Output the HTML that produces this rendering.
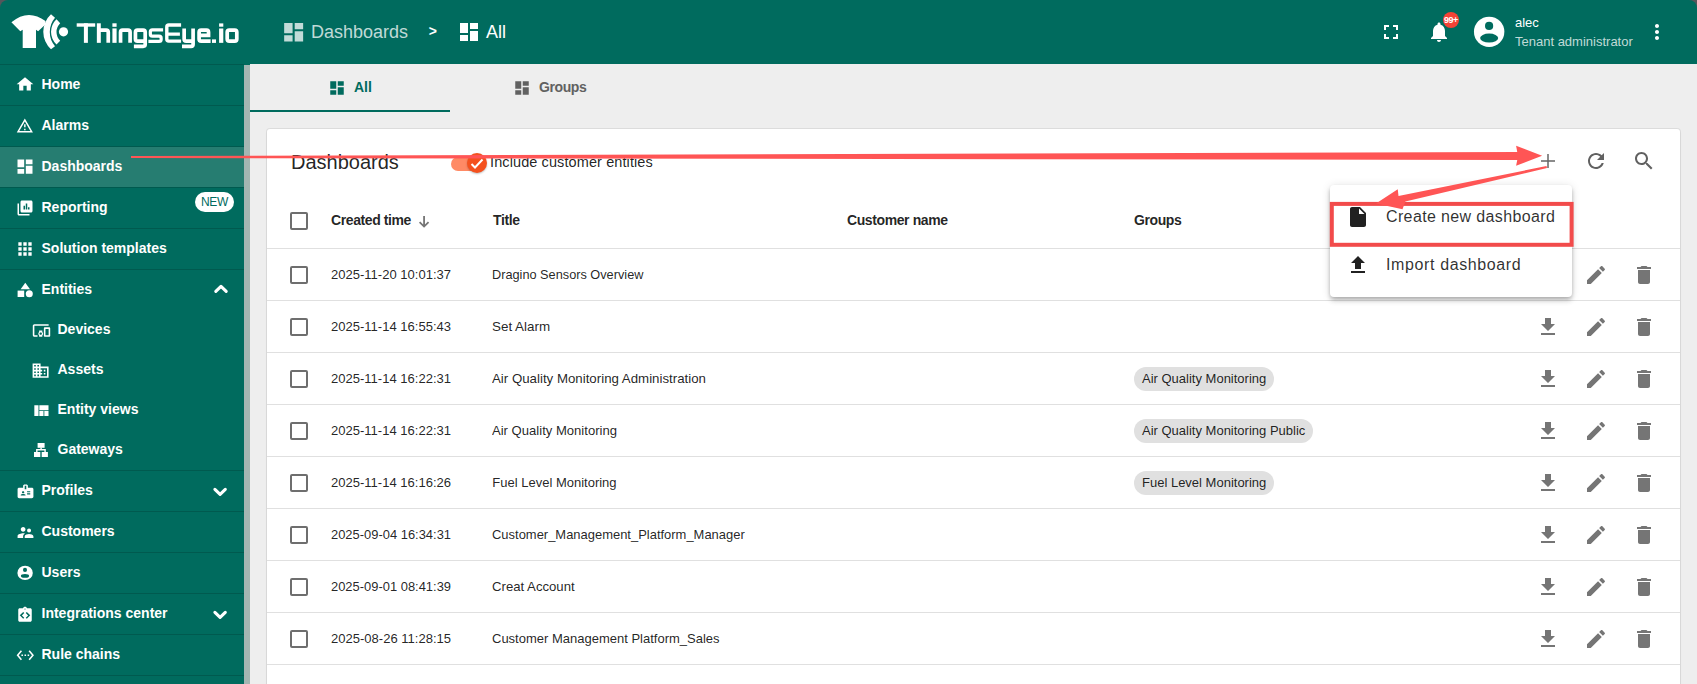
<!DOCTYPE html><html><head><meta charset="utf-8"><style>
*{box-sizing:border-box;margin:0;padding:0}
html,body{width:1697px;height:684px;overflow:hidden;background:#56565b;font-family:"Liberation Sans",sans-serif}
#root{position:absolute;left:0;top:0;width:1697px;height:684px;overflow:hidden;border-radius:8px 8px 0 0;background:#006b5e}
.a{position:absolute}
.t{position:absolute;white-space:nowrap;line-height:1}
#hdr{position:absolute;left:0;top:0;width:1697px;height:64px;background:#006b5e}
#side{position:absolute;left:0;top:64px;width:244px;height:620px;background:#006b5e}
#sbar{position:absolute;left:244px;top:65px;width:6px;height:619px;background:#a4b6b2}
.dv{position:absolute;left:0;width:244px;height:1px;background:#005a4f}
.it{position:absolute;left:0;width:244px;height:40px}
.sel{background:#267d71}
.lbl{position:absolute;color:#fff;font-weight:bold;font-size:14px;line-height:16px;white-space:nowrap}
.ic{position:absolute;width:18px;height:18px;fill:#fff}
.card{position:absolute;left:267px;top:129px;width:1413px;height:620px;background:#fff;border-radius:3px;box-shadow:0 0 0 1px rgba(0,0,0,.07),0 1px 2px rgba(0,0,0,.08)}
.rl{position:absolute;left:267px;width:1413px;height:1px;background:#e0e0e0}
.cb{position:absolute;left:290px;width:18px;height:18px;border:2px solid #6e6e6e;border-radius:2px}
.cell{position:absolute;font-size:13px;transform-origin:0 50%;color:rgba(0,0,0,.87);white-space:nowrap;line-height:16px}
.hc{position:absolute;font-size:14px;letter-spacing:-.4px;font-weight:bold;color:rgba(0,0,0,.87);white-space:nowrap;line-height:16px}
.chip{position:absolute;left:1134px;height:24px;border-radius:12px;background:#e0e0e0;font-size:13px;color:rgba(0,0,0,.87);padding:0 8px;line-height:24px;white-space:nowrap}
.act{position:absolute;width:24px;height:24px;fill:#757575}
</style></head><body><div id="root">
<div class="a" style="left:250px;top:64px;width:1447px;height:620px;background:#eeeeee"></div><div id="side"></div><div id="sbar"></div>
<div class="dv" style="top:64px"></div>
<div class="dv" style="top:105px"></div>
<div class="dv" style="top:146px"></div>
<div class="dv" style="top:187px"></div>
<div class="dv" style="top:228px"></div>
<div class="dv" style="top:269px"></div>
<div class="dv" style="top:470px"></div>
<div class="dv" style="top:511px"></div>
<div class="dv" style="top:552px"></div>
<div class="dv" style="top:593px"></div>
<div class="dv" style="top:634px"></div>
<div class="dv" style="top:675px"></div>
<svg class="a" style="left:15.00px;top:75.00px;width:20.00px;height:18.50px;fill:#fff" viewBox="0 0 24 24" preserveAspectRatio="none"><path d="M10 20v-6h4v6h5v-8h3L12 3 2 12h3v8z"/></svg>
<div class="lbl" style="left:41.5px;top:76px">Home</div>
<svg class="a" style="left:16.00px;top:117.20px;width:17.70px;height:17.70px;fill:#fff" viewBox="0 0 24 24" preserveAspectRatio="none"><path d="M12 5.99 19.53 19H4.47L12 5.99M12 2 1 21h22L12 2zm1 14h-2v2h2v-2zm0-6h-2v4h2v-4z"/></svg>
<div class="lbl" style="left:41.5px;top:117px">Alarms</div>
<div class="it sel" style="top:147px"></div>
<svg class="a" style="left:15.00px;top:157.00px;width:20.00px;height:19.00px;fill:#fff" viewBox="0 0 24 24" preserveAspectRatio="none"><path d="M3 13h8V3H3v10zm0 8h8v-6H3v6zm10 0h8V11h-8v10zm0-18v6h8V3h-8z"/></svg>
<div class="lbl" style="left:41.5px;top:158px">Dashboards</div>
<svg class="a" style="left:15.70px;top:199.20px;width:18.00px;height:18.00px;fill:#fff" viewBox="0 0 24 24" preserveAspectRatio="none"><path d="M4 6H2v14c0 1.1.9 2 2 2h14v-2H4V6zm16-4H8c-1.1 0-2 .9-2 2v12c0 1.1.9 2 2 2h12c1.1 0 2-.9 2-2V4c0-1.1-.9-2-2-2zm-8 12h-2V9h2v5zm3 0h-2V6h2v8zm3 0h-2v-3h2v3z"/></svg>
<div class="lbl" style="left:41.5px;top:199px">Reporting</div>
<svg class="a" style="left:15.00px;top:239.00px;width:20.00px;height:20.00px;fill:#fff" viewBox="0 0 24 24" preserveAspectRatio="none"><path d="M4 8h4V4H4v4zm6 12h4v-4h-4v4zm-6 0h4v-4H4v4zm0-6h4v-4H4v4zm6 0h4v-4h-4v4zm6-10v4h4V4h-4zm-6 4h4V4h-4v4zm6 6h4v-4h-4v4zm0 6h4v-4h-4v4z"/></svg>
<div class="lbl" style="left:41.5px;top:240px">Solution templates</div>
<div class="lbl" style="left:41.5px;top:281px">Entities</div>
<svg class="a" style="left:200px;top:270px;width:40px;height:40px" viewBox="200 270 40 40"><path d="M215.8 291.40 L221 286.30 L226.2 291.40" fill="none" stroke="#fff" stroke-width="3.1" stroke-linecap="round" stroke-linejoin="round"/></svg>
<svg class="a" style="left:31.70px;top:320.90px;width:19.00px;height:19.00px;fill:#fff" viewBox="0 0 24 24" preserveAspectRatio="none"><path d="M3 6h18V4H3c-1.1 0-2 .9-2 2v12c0 1.1.9 2 2 2h4v-2H3V6zm10 6H9v1.78c-.61.55-1 1.33-1 2.22s.39 1.67 1 2.22V20h4v-1.78c.61-.55 1-1.34 1-2.22s-.39-1.67-1-2.22V12zm-2 5.5c-.83 0-1.5-.67-1.5-1.5s.67-1.5 1.5-1.5 1.5.67 1.5 1.5-.67 1.5-1.5 1.5zM22 8h-6c-.5 0-1 .5-1 1v10c0 .5.5 1 1 1h6c.5 0 1-.5 1-1V9c0-.5-.5-1-1-1zm-1 10h-4v-8h4v8z"/></svg>
<div class="lbl" style="left:57.5px;top:321px">Devices</div>
<svg class="a" style="left:31.40px;top:360.50px;width:19.20px;height:19.20px;fill:#fff" viewBox="0 0 24 24" preserveAspectRatio="none"><path d="M12 7V3H2v18h20V7H12zM6 19H4v-2h2v2zm0-4H4v-2h2v2zm0-4H4V9h2v2zm0-4H4V5h2v2zm4 12H8v-2h2v2zm0-4H8v-2h2v2zm0-4H8V9h2v2zm0-4H8V5h2v2zm10 12h-8v-2h2v-2h-2v-2h2v-2h-2V9h8v10zm-2-8h-2v2h2v-2zm0 4h-2v2h2v-2z"/></svg>
<div class="lbl" style="left:57.5px;top:361px">Assets</div>
<svg class="a" style="left:30.90px;top:400.80px;width:20.00px;height:20.00px;fill:#fff" viewBox="0 0 24 24" preserveAspectRatio="none"><path d="M10 18h5v-6h-5v6zm-6 0h5V5H4v13zm12 0h5v-6h-5v6zM10 5v6h11V5H10z"/></svg>
<div class="lbl" style="left:57.5px;top:401px">Entity views</div>
<div class="lbl" style="left:57.5px;top:441px">Gateways</div>
<svg class="a" style="left:15.50px;top:482.50px;width:19.00px;height:16.60px;fill:#fff" viewBox="0 0 24 24" preserveAspectRatio="none"><path d="M20 7h-5V4c0-1.1-.9-2-2-2h-2c-1.1 0-2 .9-2 2v3H4c-1.1 0-2 .9-2 2v11c0 1.1.9 2 2 2h16c1.1 0 2-.9 2-2V9c0-1.1-.9-2-2-2zM9 12c.83 0 1.5.67 1.5 1.5S9.83 15 9 15s-1.5-.67-1.5-1.5S8.17 12 9 12zm3 6H6v-.75c0-1 2-1.5 3-1.5s3 .5 3 1.5V18zm1-9h-2V4h2v5zm5 7.5h-4V15h4v1.5zm0-3h-4V12h4v1.5z"/></svg>
<div class="lbl" style="left:41.5px;top:482px">Profiles</div>
<svg class="a" style="left:200px;top:471px;width:40px;height:40px" viewBox="200 471 40 40"><path d="M214.9 489.40 L220.1 494.40 L225.3 489.40" fill="none" stroke="#fff" stroke-width="3.1" stroke-linecap="round" stroke-linejoin="round"/></svg>
<svg class="a" style="left:15.50px;top:523.00px;width:19.00px;height:19.00px;fill:#fff" viewBox="0 0 24 24" preserveAspectRatio="none"><path d="M16.5 12c1.38 0 2.49-1.12 2.49-2.5S17.88 7 16.5 7C15.12 7 14 8.12 14 9.5s1.12 2.5 2.5 2.5zM9 11c1.66 0 2.99-1.34 2.99-3S10.66 5 9 5C7.34 5 6 6.34 6 8s1.34 3 3 3zm7.5 3c-1.83 0-5.5.92-5.5 2.75V19h11v-2.25c0-1.83-3.67-2.75-5.5-2.75zM9 13c-2.33 0-7 1.17-7 3.5V19h7v-2.25c0-.85.33-2.34 2.37-3.47C10.5 13.1 9.66 13 9 13z"/></svg>
<div class="lbl" style="left:41.5px;top:523px">Customers</div>
<div class="lbl" style="left:41.5px;top:564px">Users</div>
<svg class="a" style="left:15.75px;top:605.65px;width:18.00px;height:18.00px;fill:#fff" viewBox="0 0 24 24" preserveAspectRatio="none"><path d="M19 3h-4.18C14.4 1.84 13.3 1 12 1s-2.4.84-2.82 2H5c-1.1 0-2 .9-2 2v14c0 1.1.9 2 2 2h14c1.1 0 2-.9 2-2V5c0-1.1-.9-2-2-2zm-8 12.59L9.59 17 5 12.41 9.59 8 11 9.41 7.83 12.5 11 15.59zm1-10.84c-.41 0-.75-.34-.75-.75s.34-.75.75-.75.75.34.75.75-.34.75-.75.75zM14.41 17 13 15.59l3.17-3.09L13 9.41 14.41 8 19 12.41 14.41 17z"/></svg>
<div class="lbl" style="left:41.5px;top:605px">Integrations center</div>
<svg class="a" style="left:200px;top:594px;width:40px;height:40px" viewBox="200 594 40 40"><path d="M214.9 612.40 L220.1 617.40 L225.3 612.40" fill="none" stroke="#fff" stroke-width="3.1" stroke-linecap="round" stroke-linejoin="round"/></svg>
<svg class="a" style="left:15.80px;top:646.25px;width:18.60px;height:18.60px;fill:#fff" viewBox="0 0 24 24" preserveAspectRatio="none"><path d="M7.77 6.76 6.23 5.48.82 12l5.41 6.52 1.54-1.28L3.42 12l4.35-5.24zM7 13h2v-2H7v2zm10-2h-2v2h2v-2zm-6 2h2v-2h-2v2zm6.77-7.52-1.54 1.28L20.58 12l-4.35 5.24 1.54 1.28L23.18 12l-5.41-6.52z"/></svg>
<div class="lbl" style="left:41.5px;top:646px">Rule chains</div>
<svg class="a" style="left:0;top:0;width:244px;height:684px;fill:#fff" viewBox="0 0 244 684"><path d="M25.3 282.7 L30 289.2 H20.6 Z"/><rect x="17.6" y="290.6" width="6.6" height="6.4"/><circle cx="29.3" cy="293.8" r="3.5"/><rect x="37.6" y="443" width="7" height="4.8"/><rect x="40.4" y="447.5" width="1.4" height="2"/><path d="M36.1 449.1 H45.8 V452 H44.4 V450.6 H37.5 V452 H36.1 Z"/><rect x="34" y="452" width="6.3" height="5"/><ellipse cx="25.1" cy="572.9" rx="7.7" ry="7.2"/><circle cx="25" cy="569.9" r="2.05" fill="#006b5e"/><ellipse cx="25" cy="575.9" rx="4.1" ry="1.9" fill="#006b5e"/><rect x="41.7" y="452" width="6.2" height="5"/></svg>
<div class="a" style="left:195px;top:192px;width:39px;height:20px;border-radius:10px;background:#fff;color:#006b5e;font-size:12px;letter-spacing:-.4px;line-height:20px;text-align:center">NEW</div>
<svg class="a" style="left:0;top:0;width:250px;height:64px" viewBox="0 0 250 64"><g fill="#fff"><path d="M11.4 22.3 Q28.15 8.1 45.5 21.1 L44.9 25 L38.1 31.2 L36 29.7 V48.1 H22.7 V29.7 L20.3 31.2 Z"/><path d="M51 14.3 A23.7 23.7 0 0 0 51 49.3 L55 46.2 A22.1 22.1 0 0 1 55 17.7 Z"/><path d="M56.5 19.2 A17.2 17.2 0 0 0 56.5 44.4 L60.2 40.7 A12.2 12.2 0 0 1 60.2 23.2 Z"/><circle cx="63.5" cy="31.8" r="4.6"/><rect x="76.7" y="23.3" width="18.5" height="3.4"/><rect x="83.9" y="23.3" width="4.0" height="19.55"/><rect x="112.4" y="23.3" width="4.2" height="3.5"/><rect x="112.4" y="28.4" width="4.2" height="14.45"/><rect x="219.1" y="23.4" width="4.2" height="3.3"/><rect x="219.1" y="28.5" width="4.2" height="14.35"/><rect x="212" y="39.4" width="4" height="3.5"/><rect x="96.85" y="23.3" width="3.95" height="19.55"/></g><g fill="none" stroke="#fff" stroke-width="3.7"><path d="M98.8 30.15 H106.2 Q108.25 30.15 108.25 32.2 V42.85"/><path d="M120.55 42.85 V32.2 Q120.55 30.15 122.6 30.15 H128.05 Q130.1 30.15 130.1 32.2 V42.85"/><path d="M145.2 41.1 H137.5 Q135.45 41.1 135.45 39.05 V32.2 Q135.45 30.15 137.5 30.15 H143.15 Q145.2 30.15 145.2 32.2 V44.3 Q145.2 46.3 143.15 46.3 H133.9"/><path d="M163.1 29.8 H152.4 Q150.35 29.8 150.35 31.85 V34.2 Q150.35 36.2 152.4 36.2 H159.1 Q161.15 36.2 161.15 38.25 V39.4 Q161.15 41.3 159.1 41.3 H148.4" stroke-width="3.2"/><path d="M181.1 25.05 H168.8 Q166.8 25.05 166.8 27.1 V39.05 Q166.8 41.1 168.8 41.1 H181.1" stroke-width="3.4"/><path d="M166.8 34.15 H179.9" stroke-width="3.2"/><path d="M184.15 28.5 V39.05 Q184.15 41.1 186.2 41.1 H193.1 M193.1 28.5 V44.25 Q193.1 46.3 191.05 46.3 H182"/><path d="M210.6 41.1 H201.15 Q199.1 41.1 199.1 39.05 V32.2 Q199.1 30.1 201.15 30.1 H206.5 Q208.55 30.1 208.55 32.2 V35.35 H199.1"/><path d="M229.3 30.05 H234.75 Q236.8 30.05 236.8 32.1 V39.05 Q236.8 41.1 234.75 41.1 H229.3 Q227.2 41.1 227.2 39.05 V32.1 Q227.2 30.05 229.3 30.05 Z"/></g></svg>
<svg class="a" style="left:281.04px;top:19.70px;width:25.30px;height:24.50px;fill:rgba(255,255,255,.76)" viewBox="0 0 24 24" preserveAspectRatio="none"><path d="M3 13h8V3H3v10zm0 8h8v-6H3v6zm10 0h8V11h-8v10zm0-18v6h8V3h-8z"/></svg>
<div class="t" style="left:311px;top:23px;font-size:18px;color:rgba(255,255,255,.76)">Dashboards</div>
<div class="t" style="left:428.7px;top:24px;font-size:14px;color:#fff;font-weight:bold">&gt;</div>
<svg class="a" style="left:457px;top:20px;width:24px;height:24px;fill:#fff" viewBox="0 0 24 24"><path d="M3 13h8V3H3v10zm0 8h8v-6H3v6zm10 0h8V11h-8v10zm0-18v6h8V3h-8z"/></svg>
<div class="t" style="left:486px;top:23px;font-size:18px;color:#fff">All</div>
<svg class="a" style="left:1379px;top:20px;width:24px;height:24px;fill:#fff" viewBox="0 0 24 24"><path d="M7 14H5v5h5v-2H7v-3zm-2-4h2V7h3V5H5v5zm12 7h-3v2h5v-5h-2v3zM14 5v2h3v3h2V5h-5z"/></svg>
<svg class="a" style="left:1427px;top:20px;width:24px;height:24px;fill:#fff" viewBox="0 0 24 24"><path d="M12 22c1.1 0 2-.9 2-2h-4c0 1.1.89 2 2 2zm6-6v-5c0-3.07-1.64-5.64-4.5-6.32V4c0-.83-.67-1.5-1.5-1.5s-1.5.67-1.5 1.5v.68C7.63 5.36 6 7.92 6 11v5l-2 2v1h16v-1l-2-2z"/></svg>
<div class="a" style="left:1443px;top:12px;width:16px;height:16px;border-radius:8px;background:#f44336;color:#fff;font-size:9px;font-weight:bold;line-height:16px;text-align:center;letter-spacing:-.5px">99+</div>
<svg class="a" style="left:1470px;top:14px;width:40px;height:36px" viewBox="1470 14 40 36"><circle cx="1489.15" cy="31.85" r="15.2" fill="#fff"/><circle cx="1489.1" cy="25.9" r="4.1" fill="#006b5e"/><ellipse cx="1489.15" cy="38.05" rx="9.05" ry="4.45" fill="#006b5e"/></svg>
<div class="t" style="left:1515px;top:16px;font-size:13px;color:#fff">alec</div>
<div class="t" style="left:1515px;top:35px;font-size:13px;color:rgba(255,255,255,.76)">Tenant administrator</div>
<svg class="a" style="left:1645px;top:20px;width:24px;height:24px;fill:#fff" viewBox="0 0 24 24"><path d="M12 8c1.1 0 2-.9 2-2s-.9-2-2-2-2 .9-2 2 .9 2 2 2zm0 2c-1.1 0-2 .9-2 2s.9 2 2 2 2-.9 2-2-.9-2-2-2zm0 6c-1.1 0-2 .9-2 2s.9 2 2 2 2-.9 2-2-.9-2-2-2z"/></svg>
<svg class="a" style="left:328px;top:79px;width:18px;height:18px;fill:#006b5e" viewBox="0 0 24 24"><path d="M3 13h8V3H3v10zm0 8h8v-6H3v6zm10 0h8V11h-8v10zm0-18v6h8V3h-8z"/></svg>
<div class="t" style="left:354px;top:80px;font-size:14px;font-weight:bold;color:#006b5e">All</div>
<div class="a" style="left:250px;top:110px;width:200px;height:2px;background:#006b5e"></div>
<svg class="a" style="left:513px;top:79px;width:18px;height:18px;fill:#616161" viewBox="0 0 24 24"><path d="M3 13h8V3H3v10zm0 8h8v-6H3v6zm10 0h8V11h-8v10zm0-18v6h8V3h-8z"/></svg>
<div class="t" style="left:539px;top:80px;font-size:14px;font-weight:bold;letter-spacing:-.4px;color:#616161">Groups</div>
<div class="card"></div>
<div class="t" style="left:291px;top:152px;font-size:20px;color:rgba(0,0,0,.87)">Dashboards</div>
<div class="a" style="left:451px;top:157px;width:34px;height:14px;border-radius:7px;background:#ff8a65"></div>
<div class="a" style="left:467px;top:153px;width:20px;height:20px;border-radius:10px;background:#f4511e;box-shadow:0 1px 2px rgba(0,0,0,.25)"></div>
<svg class="a" style="left:467px;top:153px;width:20px;height:20px" viewBox="0 0 20 20"><path d="M4.5 11 L8 14.5 L15.5 6.5" stroke="#fff" stroke-width="2" fill="none"/></svg>
<div class="t" style="left:490px;top:155px;font-size:14.5px;letter-spacing:.1px;color:rgba(0,0,0,.87)">Include customer entities</div>
<svg class="a" style="left:1536px;top:149px;width:24px;height:24px;fill:#666" viewBox="0 0 24 24"><path d="M19 12.75h-6.25V19h-1.5v-6.25H5v-1.5h6.25V5h1.5v6.25H19v1.5z"/></svg>
<svg class="a" style="left:1584px;top:149px;width:24px;height:24px;fill:#616161" viewBox="0 0 24 24"><path d="M17.65 6.35C16.2 4.9 14.21 4 12 4c-4.42 0-7.99 3.58-7.99 8s3.57 8 7.99 8c3.73 0 6.84-2.55 7.73-6h-2.08c-.82 2.33-3.04 4-5.65 4-3.31 0-6-2.69-6-6s2.69-6 6-6c1.66 0 3.14.69 4.22 1.78L13 11h7V4l-2.35 2.35z"/></svg>
<svg class="a" style="left:1632px;top:149px;width:24px;height:24px;fill:#616161" viewBox="0 0 24 24"><path d="M15.5 14h-.79l-.28-.27C15.41 12.59 16 11.11 16 9.5 16 5.91 13.09 3 9.5 3S3 5.91 3 9.5 5.91 16 9.5 16c1.61 0 3.09-.59 4.23-1.57l.27.28v.79l5 4.99L20.49 19l-4.99-5zm-6 0C7.01 14 5 11.99 5 9.5S7.01 5 9.5 5 14 7.01 14 9.5 11.99 14 9.5 14z"/></svg>
<div class="cb" style="top:212px"></div>
<div class="hc" style="left:331px;top:212px">Created time</div>
<svg class="a" style="left:410px;top:208px;width:26px;height:26px" viewBox="410 208 26 26"><path d="M424.07 216 V226.4 M419.6 222.2 L424.07 226.6 L428.55 222.2" fill="none" stroke="#757575" stroke-width="1.8"/></svg>
<div class="hc" style="left:493px;top:212px">Title</div>
<div class="hc" style="left:847px;top:212px">Customer name</div>
<div class="hc" style="left:1134px;top:212px">Groups</div>
<div class="rl" style="top:248px"></div>
<div class="cb" style="top:266px"></div>
<div class="cell" style="left:331px;top:267px;transform:scaleX(1.0025)">2025-11-20 10:01:37</div>
<div class="cell" style="left:492.3px;top:267px;transform:scaleX(0.9792)">Dragino Sensors Overview</div>
<svg class="act" style="left:1536px;top:263px" viewBox="0 0 24 24"><path d="M19 9h-4V3H9v6H5l7 7 7-7zM5 18v2h14v-2H5z"/></svg>
<svg class="act" style="left:1584px;top:263px" viewBox="0 0 24 24"><path d="M3 17.25V21h3.75L17.81 9.94l-3.75-3.75L3 17.25zM20.71 7.04c.39-.39.39-1.02 0-1.41l-2.34-2.34c-.39-.39-1.02-.39-1.41 0l-1.83 1.83 3.75 3.75 1.83-1.83z"/></svg>
<svg class="act" style="left:1632px;top:263px" viewBox="0 0 24 24"><path d="M6 19c0 1.1.9 2 2 2h8c1.1 0 2-.9 2-2V7H6v12zM19 4h-3.5l-1-1h-5l-1 1H5v2h14V4z"/></svg>
<div class="rl" style="top:300px"></div>
<div class="cb" style="top:318px"></div>
<div class="cell" style="left:331px;top:319px;transform:scaleX(1.0025)">2025-11-14 16:55:43</div>
<div class="cell" style="left:492.3px;top:319px;transform:scaleX(1.0309)">Set Alarm</div>
<svg class="act" style="left:1536px;top:315px" viewBox="0 0 24 24"><path d="M19 9h-4V3H9v6H5l7 7 7-7zM5 18v2h14v-2H5z"/></svg>
<svg class="act" style="left:1584px;top:315px" viewBox="0 0 24 24"><path d="M3 17.25V21h3.75L17.81 9.94l-3.75-3.75L3 17.25zM20.71 7.04c.39-.39.39-1.02 0-1.41l-2.34-2.34c-.39-.39-1.02-.39-1.41 0l-1.83 1.83 3.75 3.75 1.83-1.83z"/></svg>
<svg class="act" style="left:1632px;top:315px" viewBox="0 0 24 24"><path d="M6 19c0 1.1.9 2 2 2h8c1.1 0 2-.9 2-2V7H6v12zM19 4h-3.5l-1-1h-5l-1 1H5v2h14V4z"/></svg>
<div class="rl" style="top:352px"></div>
<div class="cb" style="top:370px"></div>
<div class="cell" style="left:331px;top:371px;transform:scaleX(1.0025)">2025-11-14 16:22:31</div>
<div class="cell" style="left:492.3px;top:371px;transform:scaleX(1.0211)">Air Quality Monitoring Administration</div>
<div class="chip" style="top:367px">Air Quality Monitoring</div>
<svg class="act" style="left:1536px;top:367px" viewBox="0 0 24 24"><path d="M19 9h-4V3H9v6H5l7 7 7-7zM5 18v2h14v-2H5z"/></svg>
<svg class="act" style="left:1584px;top:367px" viewBox="0 0 24 24"><path d="M3 17.25V21h3.75L17.81 9.94l-3.75-3.75L3 17.25zM20.71 7.04c.39-.39.39-1.02 0-1.41l-2.34-2.34c-.39-.39-1.02-.39-1.41 0l-1.83 1.83 3.75 3.75 1.83-1.83z"/></svg>
<svg class="act" style="left:1632px;top:367px" viewBox="0 0 24 24"><path d="M6 19c0 1.1.9 2 2 2h8c1.1 0 2-.9 2-2V7H6v12zM19 4h-3.5l-1-1h-5l-1 1H5v2h14V4z"/></svg>
<div class="rl" style="top:404px"></div>
<div class="cb" style="top:422px"></div>
<div class="cell" style="left:331px;top:423px;transform:scaleX(1.0025)">2025-11-14 16:22:31</div>
<div class="cell" style="left:492.3px;top:423px;transform:scaleX(1.0056)">Air Quality Monitoring</div>
<div class="chip" style="top:419px">Air Quality Monitoring Public</div>
<svg class="act" style="left:1536px;top:419px" viewBox="0 0 24 24"><path d="M19 9h-4V3H9v6H5l7 7 7-7zM5 18v2h14v-2H5z"/></svg>
<svg class="act" style="left:1584px;top:419px" viewBox="0 0 24 24"><path d="M3 17.25V21h3.75L17.81 9.94l-3.75-3.75L3 17.25zM20.71 7.04c.39-.39.39-1.02 0-1.41l-2.34-2.34c-.39-.39-1.02-.39-1.41 0l-1.83 1.83 3.75 3.75 1.83-1.83z"/></svg>
<svg class="act" style="left:1632px;top:419px" viewBox="0 0 24 24"><path d="M6 19c0 1.1.9 2 2 2h8c1.1 0 2-.9 2-2V7H6v12zM19 4h-3.5l-1-1h-5l-1 1H5v2h14V4z"/></svg>
<div class="rl" style="top:456px"></div>
<div class="cb" style="top:474px"></div>
<div class="cell" style="left:331px;top:475px;transform:scaleX(1.0025)">2025-11-14 16:16:26</div>
<div class="cell" style="left:492.3px;top:475px;transform:scaleX(1.0000)">Fuel Level Monitoring</div>
<div class="chip" style="top:471px">Fuel Level Monitoring</div>
<svg class="act" style="left:1536px;top:471px" viewBox="0 0 24 24"><path d="M19 9h-4V3H9v6H5l7 7 7-7zM5 18v2h14v-2H5z"/></svg>
<svg class="act" style="left:1584px;top:471px" viewBox="0 0 24 24"><path d="M3 17.25V21h3.75L17.81 9.94l-3.75-3.75L3 17.25zM20.71 7.04c.39-.39.39-1.02 0-1.41l-2.34-2.34c-.39-.39-1.02-.39-1.41 0l-1.83 1.83 3.75 3.75 1.83-1.83z"/></svg>
<svg class="act" style="left:1632px;top:471px" viewBox="0 0 24 24"><path d="M6 19c0 1.1.9 2 2 2h8c1.1 0 2-.9 2-2V7H6v12zM19 4h-3.5l-1-1h-5l-1 1H5v2h14V4z"/></svg>
<div class="rl" style="top:508px"></div>
<div class="cb" style="top:526px"></div>
<div class="cell" style="left:331px;top:527px;transform:scaleX(0.9941)">2025-09-04 16:34:31</div>
<div class="cell" style="left:492.3px;top:527px;transform:scaleX(0.9964)">Customer_Management_Platform_Manager</div>
<svg class="act" style="left:1536px;top:523px" viewBox="0 0 24 24"><path d="M19 9h-4V3H9v6H5l7 7 7-7zM5 18v2h14v-2H5z"/></svg>
<svg class="act" style="left:1584px;top:523px" viewBox="0 0 24 24"><path d="M3 17.25V21h3.75L17.81 9.94l-3.75-3.75L3 17.25zM20.71 7.04c.39-.39.39-1.02 0-1.41l-2.34-2.34c-.39-.39-1.02-.39-1.41 0l-1.83 1.83 3.75 3.75 1.83-1.83z"/></svg>
<svg class="act" style="left:1632px;top:523px" viewBox="0 0 24 24"><path d="M6 19c0 1.1.9 2 2 2h8c1.1 0 2-.9 2-2V7H6v12zM19 4h-3.5l-1-1h-5l-1 1H5v2h14V4z"/></svg>
<div class="rl" style="top:560px"></div>
<div class="cb" style="top:578px"></div>
<div class="cell" style="left:331px;top:579px;transform:scaleX(0.9941)">2025-09-01 08:41:39</div>
<div class="cell" style="left:492.3px;top:579px;transform:scaleX(1.0123)">Creat Account</div>
<svg class="act" style="left:1536px;top:575px" viewBox="0 0 24 24"><path d="M19 9h-4V3H9v6H5l7 7 7-7zM5 18v2h14v-2H5z"/></svg>
<svg class="act" style="left:1584px;top:575px" viewBox="0 0 24 24"><path d="M3 17.25V21h3.75L17.81 9.94l-3.75-3.75L3 17.25zM20.71 7.04c.39-.39.39-1.02 0-1.41l-2.34-2.34c-.39-.39-1.02-.39-1.41 0l-1.83 1.83 3.75 3.75 1.83-1.83z"/></svg>
<svg class="act" style="left:1632px;top:575px" viewBox="0 0 24 24"><path d="M6 19c0 1.1.9 2 2 2h8c1.1 0 2-.9 2-2V7H6v12zM19 4h-3.5l-1-1h-5l-1 1H5v2h14V4z"/></svg>
<div class="rl" style="top:612px"></div>
<div class="cb" style="top:630px"></div>
<div class="cell" style="left:331px;top:631px;transform:scaleX(1.0025)">2025-08-26 11:28:15</div>
<div class="cell" style="left:492.3px;top:631px;transform:scaleX(0.9996)">Customer Management Platform_Sales</div>
<svg class="act" style="left:1536px;top:627px" viewBox="0 0 24 24"><path d="M19 9h-4V3H9v6H5l7 7 7-7zM5 18v2h14v-2H5z"/></svg>
<svg class="act" style="left:1584px;top:627px" viewBox="0 0 24 24"><path d="M3 17.25V21h3.75L17.81 9.94l-3.75-3.75L3 17.25zM20.71 7.04c.39-.39.39-1.02 0-1.41l-2.34-2.34c-.39-.39-1.02-.39-1.41 0l-1.83 1.83 3.75 3.75 1.83-1.83z"/></svg>
<svg class="act" style="left:1632px;top:627px" viewBox="0 0 24 24"><path d="M6 19c0 1.1.9 2 2 2h8c1.1 0 2-.9 2-2V7H6v12zM19 4h-3.5l-1-1h-5l-1 1H5v2h14V4z"/></svg>
<div class="rl" style="top:664px"></div>
<div class="a" style="left:1330px;top:185px;width:242px;height:112px;background:#fff;border-radius:4px;box-shadow:0 2px 4px -1px rgba(0,0,0,.2),0 4px 5px 0 rgba(0,0,0,.14),0 1px 10px 0 rgba(0,0,0,.12)"></div>
<svg class="a" style="left:1346px;top:205px;width:24px;height:24px;fill:#212121" viewBox="0 0 24 24"><path d="M6 2c-1.1 0-1.99.9-1.99 2L4 20c0 1.1.89 2 1.99 2H18c1.1 0 2-.9 2-2V8l-6-6H6zm7 7V3.5L18.5 9H13z"/></svg>
<div class="t" style="left:1386px;top:209.3px;font-size:16px;color:rgba(0,0,0,.82);letter-spacing:.37px">Create new dashboard</div>
<svg class="a" style="left:1346px;top:253px;width:24px;height:24px;fill:#212121" viewBox="0 0 24 24"><path d="M9 16h6v-6h4l-7-7-7 7h4zm-4 2h14v2H5z"/></svg>
<div class="t" style="left:1386px;top:257.2px;font-size:16px;color:rgba(0,0,0,.82);letter-spacing:.62px">Import dashboard</div>
<svg class="a" style="left:0;top:0;width:1697px;height:684px" viewBox="0 0 1697 684"><rect x="1331.8" y="203.9" width="239.8" height="40.9" fill="none" stroke="#f24b4b" stroke-width="4"/><path d="M131 156 L1517.25 152 L1516.1 145.8 L1542.1 155.75 L1516.1 165.7 L1517.25 159.9 L131 158 Z" fill="#f55"/><path d="M1546.5 166 L1398.5 195.9 L1397.75 189.2 L1376 203.5 L1402.5 209.3 L1405.4 201.5 L1547 168 Z" fill="#f55"/></svg>
</div></body></html>
